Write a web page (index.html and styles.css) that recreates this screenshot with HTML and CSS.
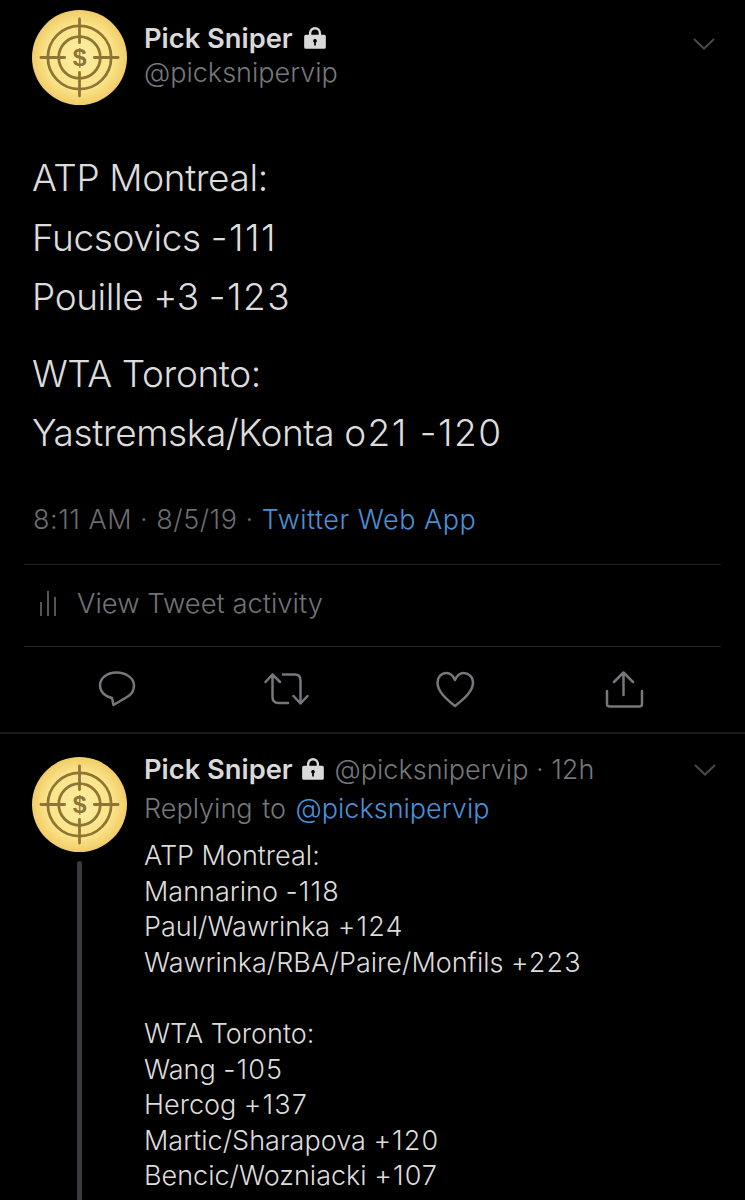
FILE: index.html
```html
<!DOCTYPE html>
<html lang="en">
<head>
  <meta charset="UTF-8" />
  <title>Pick Sniper</title>
  <link rel="stylesheet" href="styles.css">
</head>
<body>
  <svg class="defs" width="0" height="0">
    <defs>
      <radialGradient id="gold" cx="50%" cy="50%" r="55%">
        <stop offset="0%" stop-color="#fdeea0" />
        <stop offset="65%" stop-color="#fae388" />
        <stop offset="100%" stop-color="#eec45c" />
      </radialGradient>
      <symbol id="target" viewBox="0 0 96 96">
        <circle cx="48" cy="48" r="48" fill="url(#gold)" />
        <g fill="none" stroke="#8f7434" stroke-width="2.800">
          <circle cx="48" cy="48" r="32" />
          <circle cx="48" cy="48" r="21" />
          <path d="M48 9V33M48 63V87M9 48H33M63 48H87" stroke-linecap="round" />
        </g>
        <text x="48" y="57" class="dollar">$</text>
      </symbol>
      <symbol id="lock" viewBox="0 0 24 24">
        <path fill="none" stroke="currentColor" stroke-width="2.200" d="M7.500 10V7.500a4.500 4.500 0 0 1 9 0V10" />
        <path fill="currentColor" fill-rule="evenodd" d="M3.500 9h17a1.500 1.500 0 0 1 1.500 1.500v10a1.500 1.500 0 0 1-1.500 1.500h-17A1.500 1.500 0 0 1 2 20.500v-10A1.500 1.500 0 0 1 3.500 9zM12 13a1.700 1.700 0 0 0-.8 3.200V19h1.600v-2.800A1.700 1.700 0 0 0 12 13z" />
      </symbol>
      <symbol id="chevron" viewBox="0 0 24 14">
        <path fill="none" stroke="currentColor" stroke-width="2" d="M2 2l10 9.500L22 2" />
      </symbol>
    </defs>
  </svg>

  <main class="tweet">
    <header class="author">
      <svg class="avatar"><use href="#target" /></svg>
      <div class="names">
        <div class="name">Pick Sniper <svg class="lock"><use href="#lock" /></svg></div>
        <div class="handle">@picksnipervip</div>
      </div>
      <svg class="chevron"><use href="#chevron" /></svg>
    </header>

    <div class="body">
      <p>ATP Montreal:<br>Fucsovics <span class="odds">-111</span><br>Pouille +3 <span class="odds">-123</span></p>
      <p>WTA Toronto:<br>Yastremska/Konta <span class="odds">o21 -120</span></p>
    </div>

    <div class="meta">8:11 AM · 8/5/19 · <a>Twitter Web App</a></div>

    <div class="activity">
      <svg class="bars" viewBox="0 0 18 26"><path d="M2 12V26M9 1V26M16 7V26" /></svg>
      <span>View Tweet activity</span>
    </div>

    <div class="actions">
      <svg class="action" viewBox="0 0 46 38"><path d="M22.500 1.500C12.500 1.500 6 7.500 6 14.500c0 6 4.500 11 12 12.500l1.500 7L33 26c4.500-2.500 7-6.500 7-11.500C40 7.500 32.500 1.500 22.500 1.500z" /></svg>
      <svg class="action" viewBox="0 0 46 38"><path d="M1.500 11l7-7.500 7.500 7.500M8.500 3.500V26c0 4 2 6 6 6H24M19 3.500h12c3.500 0 5.500 2 5.500 6v23M29.500 25l7 7.500 7-7.500" /></svg>
      <svg class="action" viewBox="0 0 46 38"><path d="M23 35C13 27 5.500 20 5.500 11.500 5.500 6 9.500 2 14.500 2c3.500 0 6.500 2.500 8.500 7 2-4.500 5-7 8.500-7C36.500 2 41 6 41 11.500 41 20 33 27 23 35z" /></svg>
      <svg class="action" viewBox="0 0 46 38"><path d="M22.500 24V1.500M13 11l9.500-9.500L32 11M6 20v13c0 1.500 1 2.500 2.500 2.500h30c1.500 0 2.500-1 2.500-2.500V20" /></svg>
    </div>
  </main>

  <article class="reply">
    <div class="rail">
      <svg class="avatar"><use href="#target" /></svg>
      <div class="thread"></div>
    </div>
    <div class="reply-main">
      <div class="reply-head">
        <span class="name">Pick Sniper <svg class="lock"><use href="#lock" /></svg></span>
        <span class="handle">@picksnipervip · 12h</span>
        <svg class="chevron"><use href="#chevron" /></svg>
      </div>
      <div class="replying">Replying to <a>@picksnipervip</a></div>
      <div class="reply-text">
        <p>ATP Montreal:<br>Mannarino <span class="odds">-118</span><br>Paul/Wawrinka <span class="odds">+124</span><br>Wawrinka/RBA/Paire/Monfils <span class="odds">+223</span></p>
        <p>WTA Toronto:<br>Wang <span class="odds">-105</span><br>Hercog <span class="odds">+137</span><br>Martic/Sharapova <span class="odds">+120</span><br>Bencic/Wozniacki <span class="odds">+107</span></p>
      </div>
    </div>
  </article>
</body>
</html>
```

FILE: styles.css
```css
html, body {
  height: 1200px;
  overflow: hidden;
}

body {
  margin: 0;
  background: #000;
  color: #d9d9d9;
  font-family: Inter, "Liberation Sans", sans-serif;
}

p {
  margin: 0;
}

a {
  color: #4a90d9;
}

.defs {
  display: block;
  height: 0;
}

.dollar {
  font-family: "Liberation Sans", sans-serif;
  font-size: 25px;
  font-weight: 700;
  fill: #8f7434;
  text-anchor: middle;
}

.odds {
  letter-spacing: 0.04em;
}

.tweet {
  padding: 10px 24px 0;
  height: 722px;
  border-bottom: 2px solid #1c1c1e;
}

.author {
  display: flex;
  align-items: flex-start;
  padding-left: 8px;
  height: 95px;
}

.avatar {
  width: 95px;
  height: 95px;
  flex: none;
}

.names {
  margin-left: 17px;
  padding-top: 14px;
  flex: 1;
}

.name {
  font-size: 27.300px;
  line-height: 30px;
  font-weight: 600;
  color: #d9d9d9;
}

.handle {
  font-size: 27px;
  line-height: 30px;
  font-weight: 300;
  color: #75777b;
  margin-top: 4px;
}

.lock {
  width: 26px;
  height: 26px;
  color: #d9d9d9;
  vertical-align: -3px;
}

.author .lock {
  margin-left: 2px;
}

.chevron {
  width: 24px;
  height: 14px;
  color: #48494c;
  margin-top: 27px;
  margin-right: 5px;
  flex: none;
}

.body {
  margin-top: 43px;
  padding-left: 8px;
  font-size: 37px;
  line-height: 59.500px;
  font-weight: 300;
  letter-spacing: -0.4px;
  color: #dcdcdc;
}

.body p + p {
  margin-top: 17px;
}

.meta {
  margin-top: 40px;
  padding-left: 9px;
  padding-bottom: 28px;
  font-size: 27px;
  line-height: 33px;
  font-weight: 300;
  letter-spacing: 0.5px;
  color: #6a6c70;
  border-bottom: 1px solid #232325;
}

.activity {
  display: flex;
  align-items: center;
  height: 82px;
  padding-left: 15px;
  padding-bottom: 4px;
  box-sizing: border-box;
  font-size: 27.400px;
  font-weight: 300;
  color: #707276;
  border-bottom: 1px solid #232325;
}

.bars {
  width: 18px;
  height: 26px;
  margin-right: 20px;
  fill: none;
  stroke: #707276;
  stroke-width: 1.500;
}

.actions {
  display: flex;
  height: 86px;
  align-items: center;
}

.action {
  height: 38px;
  width: 46px;
  margin-top: 1px;
  fill: none;
  stroke: #75777b;
  stroke-width: 2.500;
  stroke-linecap: round;
  stroke-linejoin: round;
}

.action:nth-child(1) { margin-left: 70px; }
.action:nth-child(2) { margin-left: 124px; }
.action:nth-child(3) { margin-left: 122px; }
.action:nth-child(4) { margin-left: 123px; }

.reply {
  display: flex;
  padding: 23px 0 0 32px;
}

.rail {
  width: 95px;
  flex: none;
  display: flex;
  flex-direction: column;
  align-items: center;
}

.thread {
  width: 5px;
  height: 340px;
  margin-top: 9px;
  border-radius: 3px 3px 0 0;
  background: #3a3b3e;
}

.reply-main {
  margin-left: 17px;
  flex: 1;
  min-width: 0;
}

.reply-head {
  display: flex;
  align-items: flex-start;
  height: 30px;
  margin-top: -2px;
}

.reply-head .handle {
  margin: 0 0 0 9px;
  flex: 1;
}

.reply-head .chevron {
  margin: 8px 28px 0 0;
}

.replying {
  margin-top: 8px;
  font-size: 27px;
  line-height: 32px;
  font-weight: 300;
  word-spacing: 2px;
  color: #75777b;
}

.reply-text {
  margin-top: 13px;
  font-size: 27px;
  line-height: 35.500px;
  font-weight: 300;
  color: #dcdcdc;
}

.reply-text p + p {
  margin-top: 36px;
}
```
